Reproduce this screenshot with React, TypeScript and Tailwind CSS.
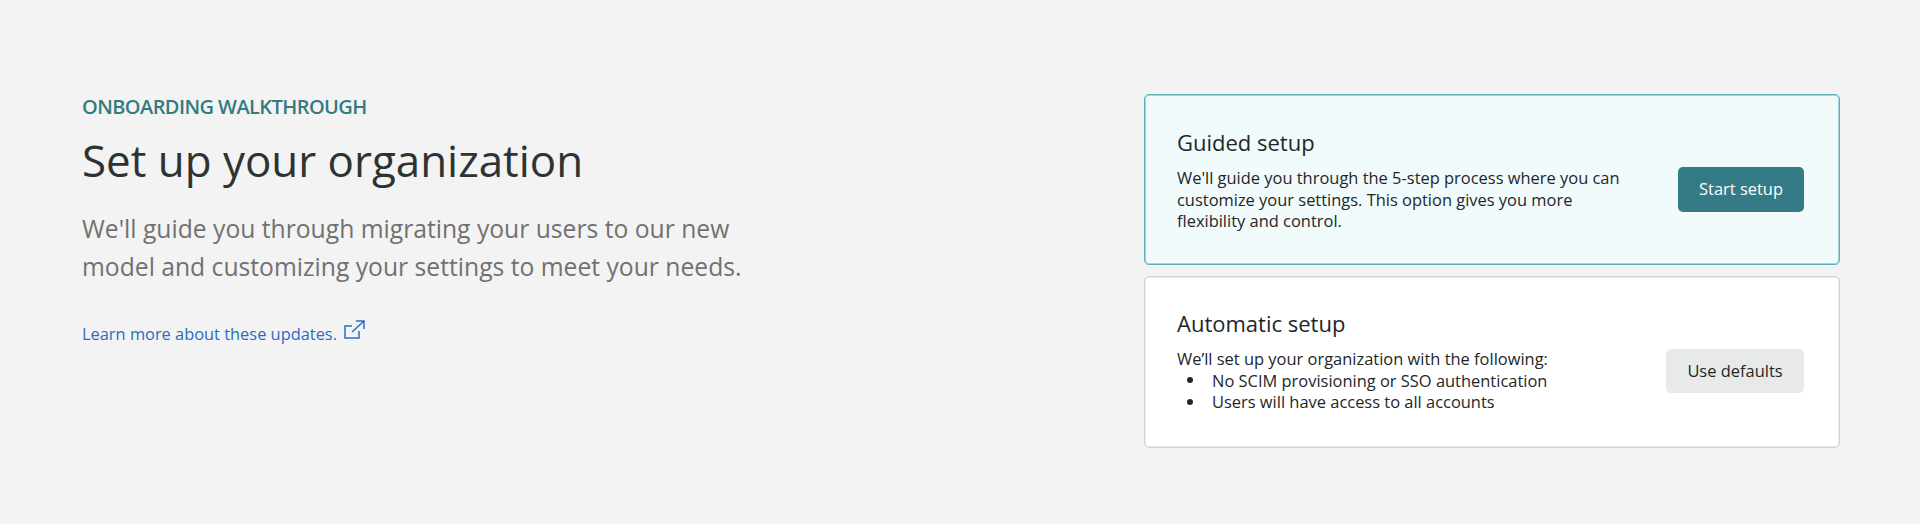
export default function App() {
  return (
    <main className="flex h-[524px] w-full items-start justify-between bg-[#f3f3f3] pl-[82px] pr-[80px] font-['Open_Sans','Noto_Sans',sans-serif]">
      <section className="pt-[94px]">
        <p className="text-[20px] leading-[26px] font-semibold tracking-[-0.58px] text-[#347b80]">ONBOARDING WALKTHROUGH</p>
        <h1 className="mt-[8px] text-[43.9px] leading-[64px] text-[#2d3233]">Set up your organization</h1>
        <p className="mt-[18px] w-[680px] text-[24.68px] leading-[38px] text-[#717171]">We'll guide you through migrating your users to our new<br />model and customizing your settings to meet your needs.</p>
        <a className="mt-[36px] flex items-start gap-[7px] text-[16.4px] leading-[24px] text-[#2b6cc0]">Learn more about these updates.
          <svg className="-mt-[3px]" width="22" height="22" viewBox="0 0 22 22" fill="none" stroke="currentColor" strokeWidth="1.5"><path d="M8 7H1v12h14v-7M8 13 20 2M12 2h8v8" /></svg>
        </a>
      </section>
      <section className="flex w-[696px] flex-col gap-[11px] pt-[94px]">
        <article className="flex h-[171px] items-start justify-between rounded-[5px] border border-[#5fb0bd] bg-[#f1fbfc] pr-[35px] pl-[32px] text-[#232629] shadow-[inset_0_0_0_1px_#a3d3db]">
          <div className="pt-[32px]"><h2 className="text-[22px] leading-[30px]">Guided setup</h2><p className="mt-[10px] text-[16.45px] leading-[21.5px]">We'll guide you through the 5-step process where you can<br />customize your settings. This option gives you more<br />flexibility and control.</p></div>
          <button className="mt-[72px] h-[45px] w-[126px] rounded-[5px] bg-[#347b85] text-[16.45px] text-white">Start setup</button>
        </article>
        <article className="flex h-[172px] items-start justify-between rounded-[5px] border border-[#d0d1d2] bg-white pr-[35px] pl-[32px] text-[#232629] shadow-[inset_0_0_0_1px_#ececec]">
          <div className="pt-[31px]"><h2 className="text-[22px] leading-[30px]">Automatic setup</h2><p className="mt-[10px] text-[16.45px] leading-[21.5px]">We’ll set up your organization with the following:</p><ul className="text-[16.45px] leading-[21.5px]"><li className="flex items-center gap-[19px] pl-[10px]"><span className="size-[6px] rounded-full bg-current" />No SCIM provisioning or SSO authentication</li><li className="flex items-center gap-[19px] pl-[10px]"><span className="size-[6px] rounded-full bg-current" />Users will have access to all accounts</li></ul></div>
          <button className="mt-[72px] h-[44px] w-[138px] rounded-[5px] bg-[#e8eaea] text-[16.45px]">Use defaults</button>
        </article>
      </section>
    </main>
  );
}
